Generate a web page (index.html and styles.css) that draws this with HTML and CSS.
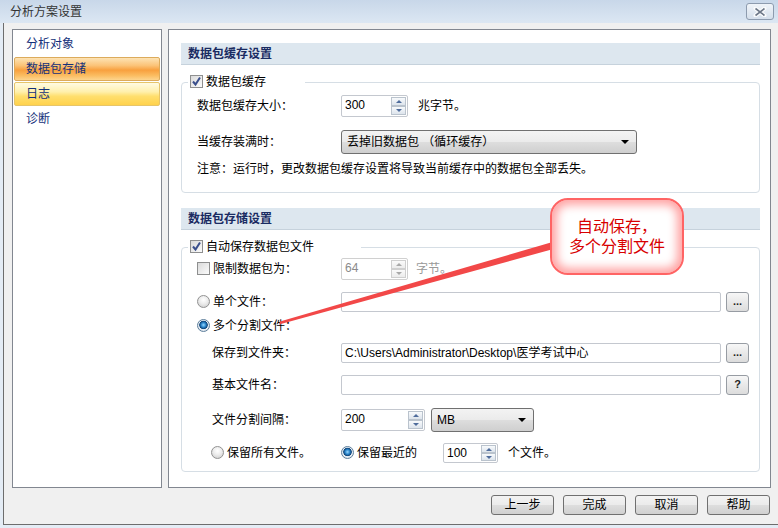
FILE: index.html
```html
<!DOCTYPE html>
<html lang="zh-CN">
<head>
<meta charset="utf-8">
<title>分析方案设置</title>
<link rel="stylesheet" href="styles.css">
</head>
<body>
<!--window starts here-->
<div class="window">
<div class="titlebar">
<span class="title">分析方案设置</span>
<span class="close"><svg width="14" height="10" viewBox="0 0 14 10"><path d="M2.5 1.5 L11.5 8.5 M11.5 1.5 L2.5 8.5" stroke="#fbfcfd" stroke-width="4" stroke-linecap="round"/><path d="M2.5 1.5 L11.5 8.5 M11.5 1.5 L2.5 8.5" stroke="#6e7888" stroke-width="1.6"/></svg></span>
</div>
<div class="frame">
<div class="main">
<!--left list-->
<ul class="nav">
<li>分析对象</li>
<li class="selected">数据包存储</li>
<li class="hot">日志</li>
<li>诊断</li>
</ul>
<!--right pane-->
<div class="pane">
<div class="section_head">数据包缓存设置</div>
<fieldset class="group group_cache">
<legend class="legend_cache"><span class="check on"><svg width="11" height="11" viewBox="0 0 11 11"><path d="M2 5.5 L4.5 8.5 L9 1.5" fill="none" stroke="#3a4f8c" stroke-width="2"/></svg></span>数据包缓存</legend>
<div class="row row_size">
<span class="label">数据包缓存大小：</span>
<span class="spin w67"><span class="spin_val">300</span><span class="spin_btns"><i class="up"></i><i class="down"></i></span></span>
<span class="unit">兆字节。</span>
</div>
<div class="row row_full">
<span class="label">当缓存装满时：</span>
<span class="combo w296"><span>丢掉旧数据包 （循环缓存）</span></span>
</div>
<div class="row row_note">注意：运行时，更改数据包缓存设置将导致当前缓存中的数据包全部丢失。</div>
</fieldset>

<div class="section_head section_store">数据包存储设置</div>
<fieldset class="group group_store">
<legend class="legend_store"><span class="check on"><svg width="11" height="11" viewBox="0 0 11 11"><path d="M2 5.5 L4.5 8.5 L9 1.5" fill="none" stroke="#3a4f8c" stroke-width="2"/></svg></span>自动保存数据包文件</legend>
<div class="row row_limit">
<span class="label"><span class="check"></span>限制数据包为：</span>
<span class="spin w67 disabled"><span class="spin_val">64</span><span class="spin_btns"><i class="up"></i><i class="down"></i></span></span>
<span class="unit gray">字节。</span>
</div>
<div class="row row_single">
<span class="label"><span class="radio"></span>单个文件：</span>
<span class="input"></span>
<span class="mini_btn">...</span>
</div>
<div class="row row_multi">
<span class="label"><span class="radio on"></span>多个分割文件：</span>
</div>
<div class="row row_folder">
<span class="label indent">保存到文件夹：</span>
<span class="input">C:\Users\Administrator\Desktop\医学考试中心</span>
<span class="mini_btn">...</span>
</div>
<div class="row row_base">
<span class="label indent">基本文件名：</span>
<span class="input"></span>
<span class="mini_btn">?</span>
</div>
<div class="row row_split">
<span class="label indent">文件分割间隔：</span>
<span class="spin w84"><span class="spin_val">200</span><span class="spin_btns"><i class="up"></i><i class="down"></i></span></span>
<span class="combo w103 mb"><span>MB</span></span>
</div>
<div class="row row_keep">
<span class="label indent_radio"><span class="radio"></span>保留所有文件。</span>
<span class="keep_recent"><span class="radio on"></span>保留最近的</span>
<span class="spin w55 keep_spin"><span class="spin_val">100</span><span class="spin_btns"><i class="up"></i><i class="down"></i></span></span>
<span class="unit">个文件。</span>
</div>
</fieldset>
</div>
</div>
<!--dialog buttons-->
<div class="buttons">
<span class="btn">上一步</span>
<span class="btn">完成</span>
<span class="btn">取消</span>
<span class="btn">帮助</span>
</div>
</div>

<!--annotation over the dialog-->
<svg class="pointer" width="778" height="528" viewBox="0 0 778 528"><polygon points="279,324.5 280,321.5 556,241 557,248" fill="#f24848"/></svg>
<div class="callout">自动保存，<br>多个分割文件</div>
</div>
<!--window ends here-->
</body>
</html>
```

FILE: styles.css
```css
body
{
margin:0;
font-family:"Liberation Sans","Noto Sans CJK SC",sans-serif;
font-size:12px;
line-height:14px;
color:#000;
}
.window
{
position:relative;
width:778px;
height:528px;
overflow:hidden;
display:flex;
flex-direction:column;
background:#e4ecf5;
}
.titlebar
{
height:23px;
display:flex;
align-items:center;
justify-content:space-between;
background:linear-gradient(#c8d7e9,#dce7f3);
}
.title
{
padding-left:10px;
color:#333;
}
.close
{
width:28px;
height:17px;
margin-right:4px;
box-sizing:border-box;
border:1px solid #8d9bae;
border-radius:3px;
background:linear-gradient(#f0f4f9,#d5dfeb);
display:flex;
align-items:center;
justify-content:center;
}
.frame
{
flex:1;
margin:0 0 3px 3px;
border-left:1px solid #6d6d6d;
border-bottom:1px solid #6d6d6d;
background:#f0f0f0;
padding:6px 7px 0 8px;
display:flex;
flex-direction:column;
}
.main
{
height:459px;
display:flex;
gap:6px;
}
.nav
{
width:150px;
box-sizing:border-box;
margin:0;
padding:2px 1px;
list-style:none;
background:#fff;
border:1px solid #828790;
}
.nav li
{
height:24px;
box-sizing:border-box;
margin-bottom:1px;
padding-left:11px;
line-height:22px;
border:1px solid transparent;
border-radius:2px;
color:#14307a;
}
.nav li.selected
{
border-color:#dcab5c;
background:linear-gradient(#fde3b4 0%,#fbc276 35%,#f8a03e 55%,#fbbd62 80%,#fdd58d 100%);
}
.nav li.hot
{
border-color:#e6c56a;
background:linear-gradient(#fffbe3 0%,#fff0ac 40%,#ffdf6e 60%,#ffd24c 100%);
}
.pane
{
flex:1;
background:#fff;
border:1px solid #828790;
padding:13px 10px 0 12px;
}
.section_head
{
height:22px;
box-sizing:border-box;
padding-left:7px;
line-height:22px;
background:#dde7ef;
border-bottom:1px solid #c6d2dc;
color:#1a2b62;
font-weight:bold;
}
.section_store
{
margin-top:15px;
}
.group
{
margin:10px 0 0 0;
padding:6px 0 15px 0;
border:1px solid #d6dee5;
border-radius:4px;
min-width:0;
}
.group_store
{
padding:4px 0 8px 0;
}
.group legend
{
margin-left:6px;
padding:0 0 0 2px;
box-sizing:border-box;
height:14px;
line-height:14px;
}
.legend_cache
{
width:117px;
}
.legend_store
{
width:173px;
}
.check
{
display:inline-block;
width:13px;
height:13px;
box-sizing:border-box;
border:1px solid #8e8f8f;
background:linear-gradient(135deg,#dadada,#fbfbfb);
margin-right:3px;
vertical-align:-2px;
}
.check svg
{
display:block;
}
.radio
{
display:inline-block;
width:13px;
height:13px;
box-sizing:border-box;
border-radius:50%;
border:1px solid #929292;
background:radial-gradient(circle at 50% 35%,#ffffff 0,#ececec 45%,#c8c8c8 100%);
margin-right:3px;
vertical-align:-2px;
}
.radio.on
{
border-color:#5e7f9c;
background:radial-gradient(circle at 50% 45%,#9ad9ff 0,#2a86cc 28%,#0e4378 48%,#e8eef4 56%,#cdd5dd 100%);
}
.row
{
display:flex;
align-items:center;
margin-left:15px;
}
.label
{
width:144px;
flex-shrink:0;
}
.indent
{
padding-left:15px;
box-sizing:border-box;
}
.indent_radio
{
padding-left:14px;
box-sizing:border-box;
}
.row_size
{
height:22px;
}
.row_full
{
height:24px;
margin-top:13px;
}
.row_note
{
height:16px;
margin-top:7px;
}
.row_limit
{
height:22px;
}
.row_single
{
height:22px;
margin-top:11px;
}
.row_multi
{
height:16px;
margin-top:5px;
}
.row_folder
{
height:22px;
margin-top:8px;
}
.row_base
{
height:22px;
margin-top:10px;
}
.row_split
{
height:24px;
margin-top:12px;
}
.row_keep
{
height:20px;
margin-top:11px;
}
.unit
{
margin-left:10px;
}
.gray
{
color:#999;
margin-left:8px;
}
.spin
{
display:flex;
box-sizing:border-box;
height:22px;
border:1px solid #c4c8cf;
border-radius:2px;
background:#fff;
}
.w67
{
width:67px;
}
.w84
{
width:84px;
}
.w55
{
width:55px;
height:20px;
}
.spin_val
{
flex:1;
padding-left:3px;
line-height:19px;
}
.spin_btns
{
display:flex;
flex-direction:column;
width:15px;
padding:1px 1px 1px 0;
}
.spin_btns i
{
flex:1;
border:1px solid #bac3cd;
background:linear-gradient(#f8fafc,#dde4ec);
display:flex;
align-items:center;
justify-content:center;
}
.spin_btns .up::after
{
content:"";
border-left:3px solid transparent;
border-right:3px solid transparent;
border-bottom:3px solid #4f6c9c;
}
.spin_btns .down::after
{
content:"";
border-left:3px solid transparent;
border-right:3px solid transparent;
border-top:3px solid #4f6c9c;
}
.disabled
{
color:#8a8a8a;
border-color:#d0d0d0;
}
.disabled .spin_btns i
{
border-color:#cfcfcf;
background:linear-gradient(#fafafa,#ececec);
}
.disabled .spin_btns .up::after
{
border-bottom-color:#a8a8a8;
}
.disabled .spin_btns .down::after
{
border-top-color:#a8a8a8;
}
.combo
{
display:flex;
align-items:center;
justify-content:space-between;
box-sizing:border-box;
height:24px;
padding:0 5px 0 5px;
border:1px solid #707070;
border-radius:3px;
background:linear-gradient(#f3f3f3 0%,#ebebeb 48%,#dddddd 52%,#cfcfcf 100%);
}
.combo::after
{
content:"";
margin-right:2px;
border-left:4px solid transparent;
border-right:4px solid transparent;
border-top:4px solid #000;
}
.w296
{
width:296px;
}
.w103
{
width:103px;
margin-left:6px;
}
.input
{
width:380px;
height:20px;
box-sizing:border-box;
padding-left:3px;
line-height:18px;
border:1px solid #c4c8cf;
border-radius:2px;
background:#fff;
}
.mini_btn
{
width:23px;
height:20px;
box-sizing:border-box;
margin-left:5px;
border:1px solid #979ca3;
border-radius:3px;
background:linear-gradient(#f7f7f7,#e9e9e9 50%,#dcdcdc);
text-align:center;
line-height:16px;
font-size:11px;
font-weight:bold;
color:#222;
}
.keep_recent
{
width:102px;
flex-shrink:0;
}
.keep_spin + .unit
{
margin-left:10px;
}
.buttons
{
display:flex;
justify-content:flex-end;
gap:9px;
margin-top:7px;
margin-right:1px;
}
.btn
{
width:63px;
height:20px;
box-sizing:border-box;
border:1px solid #707070;
border-radius:3px;
background:linear-gradient(#f3f3f3 0%,#ebebeb 48%,#dddddd 52%,#d0d0d0 100%);
text-align:center;
line-height:18px;
}
.pointer
{
position:absolute;
left:0;
top:0;
pointer-events:none;
}
.callout
{
position:absolute;
left:550px;
top:198px;
width:134px;
height:77px;
box-sizing:border-box;
border:2px solid #ff6464;
border-radius:18px;
background:#fff;
box-shadow:inset 0 0 10px 5px #ffa4a4;
display:flex;
flex-direction:column;
align-items:center;
justify-content:center;
text-align:center;
font-size:16px;
line-height:20px;
color:#d80000;
}
```
